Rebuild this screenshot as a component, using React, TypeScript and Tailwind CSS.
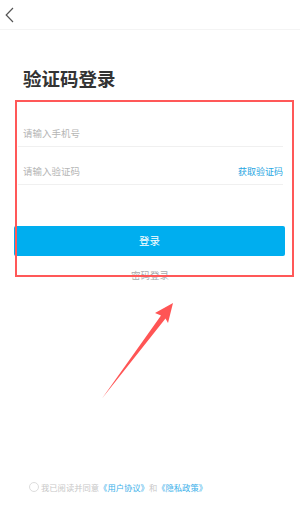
const FONT = { fontFamily: '"Noto Sans CJK SC", "Noto Sans", sans-serif' };

export default function App() {
  return (
    <div
      className="relative flex min-h-[527px] w-[300px] flex-col overflow-hidden bg-white"
      style={FONT}
    >
      {/* Header */}
      <div className="flex h-[30px] items-center border-b border-[#f4f4f4] pl-[5px]">
        <svg width="9" height="16" viewBox="0 0 9 16" fill="none">
          <path d="M8 1L1.2 8L8 15" stroke="#555" strokeWidth="1.2" />
        </svg>
      </div>

      {/* Title */}
      <h1 className="ml-[23px] mt-[34px] text-[18.5px] font-bold leading-[28px] text-[#333]">
        验证码登录
      </h1>

      {/* Inputs */}
      <div className="mx-[17px] ml-[18px] mt-[17px]">
        <div className="flex h-[38px] items-center border-b border-[#f0f0f0] pl-[5px] pt-[12px]">
          <span className="text-[9.5px] text-[#b5b5b5]">请输入手机号</span>
        </div>
        <div className="flex h-[38px] items-center justify-between border-b border-[#f0f0f0] pl-[5px] pt-[12px]">
          <span className="text-[9.5px] text-[#b5b5b5]">请输入验证码</span>
          <span className="text-[9px] text-[#27a6e2]">获取验证码</span>
        </div>
      </div>

      {/* Login button */}
      <button className="ml-[14px] mr-[15px] mt-[41px] flex h-[30px] items-center justify-center rounded-[2px] bg-[#00aeef] text-[10.5px] text-white">
        登录
      </button>

      <div className="mt-[12px] text-center text-[9.5px] leading-[14px] text-[#aaa]">
        密码登录
      </div>

      {/* Agreement */}
      <div className="mt-auto flex items-center pb-[33px] pl-[29px]">
        <span className="h-[10px] w-[10px] rounded-full border border-[#ddd]" />
        <span className="ml-[2px] text-[8.3px] leading-[14px] text-[#c8c8c8]">
          我已阅读并同意
          <span className="text-[#3ab0ea]">《用户协议》</span>和
          <span className="text-[#3ab0ea]">《隐私政策》</span>
        </span>
      </div>

      {/* Annotation overlay */}
      <div className="pointer-events-none absolute left-[15px] top-[100px] h-[177px] w-[279px] border-2 border-[#ff5858]" />
      <svg
        className="pointer-events-none absolute left-0 top-0"
        width="300"
        height="527"
        viewBox="0 0 300 527"
      >
        <path
          d="M102 398.5 L161 315.5 L155 313 L173 303 L168 323 L165.5 318.5 Z"
          fill="#ff5555"
        />
      </svg>
    </div>
  );
}
